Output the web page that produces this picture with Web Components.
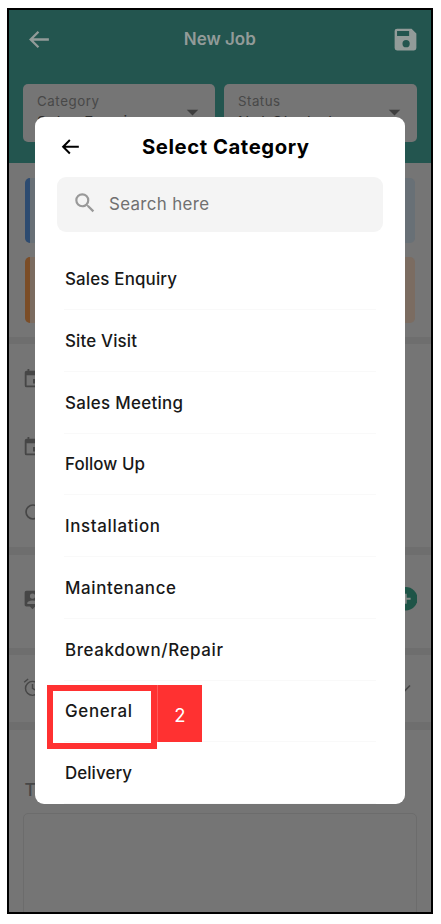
<!DOCTYPE html>
<html lang="en">
<head>
<meta charset="utf-8">
<title>New Job</title>
<style>
body{margin:0;background:#fff;font-family:Inter,"Open Sans",sans-serif;width:441px;height:924px;overflow:hidden}
</style>
</head>
<body>
<job-screen>
  <job-header slot="header"></job-header>
  <job-form></job-form>
  <category-dialog slot="dialog">
    <category-item w="112">Sales Enquiry</category-item>
    <category-item w="72">Site Visit</category-item>
    <category-item w="118">Sales Meeting</category-item>
    <category-item w="80">Follow Up</category-item>
    <category-item w="95">Installation</category-item>
    <category-item w="111">Maintenance</category-item>
    <category-item w="158">Breakdown/Repair</category-item>
    <category-item w="67">General</category-item>
    <category-item w="67">Delivery</category-item>
  </category-dialog>
  <step-marker slot="marker">2</step-marker>
</job-screen>
<script>
const define=(name,html,after)=>customElements.define(name,class extends HTMLElement{
  constructor(){super();this.attachShadow({mode:'open'}).innerHTML=html}
  connectedCallback(){if(after)after(this)}
});

/* One line of text tracked so that it spans w pixels. */
define('fit-text',`<style>:host{display:inline-block;white-space:nowrap}span{display:inline-block}</style><span><slot></slot></span>`,el=>{
  const s=el.shadowRoot.querySelector('span'),w=+el.getAttribute('w'),n=el.textContent.length;
  if(!w)return;
  const d=w-s.getBoundingClientRect().width;
  s.style.letterSpacing=(d/(n-1))+'px';
  s.style.marginRight=(-d/(n-1))+'px';
});

const paths={
  back:'<path d="M21 12H4M11 4.5 3.5 12l7.5 7.5" fill="none" stroke="currentColor" stroke-width="2.2"/>',
  save:'<path fill="currentColor" fill-rule="evenodd" d="M17 3H5a2 2 0 0 0-2 2v14a2 2 0 0 0 2 2h14a2 2 0 0 0 2-2V7zM12.5 18.5a3 3 0 1 1 0-6 3 3 0 0 1 0 6zM15 9H5V5h10z"/>',
  search:'<path fill="currentColor" d="M15.5 14h-.79l-.28-.27A6.47 6.47 0 0 0 16 9.5 6.5 6.5 0 1 0 9.5 16c1.61 0 3.09-.59 4.23-1.57l.27.28v.79l5 4.99L20.49 19zm-6 0a4.5 4.5 0 1 1 0-9 4.5 4.5 0 0 1 0 9z"/>',
  calendar:'<path fill="currentColor" fill-rule="evenodd" d="M19 3h-1V1h-2v2H8V1H6v2H5a2 2 0 0 0-2 2v14a2 2 0 0 0 2 2h14a2 2 0 0 0 2-2V5a2 2 0 0 0-2-2zm0 16H5V8h14zM12 12h5v5h-5z"/>',
  circle:'<circle cx="12" cy="12" r="7.6" fill="none" stroke="currentColor" stroke-width="1.8"/>',
  contact:'<path fill="currentColor" fill-rule="evenodd" d="M19 2H5a2 2 0 0 0-2 2v14c0 1.1.9 2 2 2h4l3 3 3-3h4a2 2 0 0 0 2-2V4a2 2 0 0 0-2-2zm-7 3a3 3 0 1 1 0 6 3 3 0 0 1 0-6zm6 12H6v-1c0-2 4-3 6-3s6 1 6 3z"/>',
  alarm:'<path d="M2.5 6 7 2.3M21.5 6 17 2.3M12 8v5l4 2.3" fill="none" stroke="currentColor" stroke-width="1.7"/><circle cx="12" cy="13" r="8" fill="none" stroke="currentColor" stroke-width="1.7"/>',
  chevron:'<path d="m6 9 6 6 6-6" fill="none" stroke="currentColor" stroke-width="2"/>',
  add:'<circle cx="12" cy="12" r="12" fill="#1e5447"/><path d="M7 12h10M12 7v10" stroke="#858a88" stroke-width="2"/>',
  caret:'<path d="M6 9h12l-6 6z" fill="currentColor"/>'
};
define('app-icon',`<style>:host{display:block;flex:none}svg{display:block}</style>`,el=>{
  const s=el.getAttribute('size');
  el.shadowRoot.innerHTML+=`<svg width="${s}" height="${s}" viewBox="0 0 24 24">${paths[el.getAttribute('name')]}</svg>`;
});

define('select-field',`<style>
:host{display:flex;box-sizing:border-box;height:58px;border-radius:5px;background:#757575;color:#484848;padding:7px 15px 0 14px;justify-content:space-between}
.text{display:flex;flex-direction:column;font-size:13.3px;line-height:20px}
.value{font-size:15px;line-height:20px;color:#2c2c2c;margin-top:1.5px}
app-icon{margin:10.5px -4px 0 0;color:#3e3e3e}
</style><div class="text"><slot name="label"></slot><div class="value"><slot></slot></div></div><app-icon name="caret" size="23"></app-icon>`);

define('job-header',`<style>
:host{display:flex;flex-direction:column;height:153px;background:#23554f;color:#929b99}
.bar{display:flex;align-items:center;justify-content:space-between;height:58px;padding:0 10.5px 0 18px}
.title{font-size:17px;font-weight:600;line-height:24px;margin-right:4px}
.fields{display:grid;grid-template-columns:192px 193px;gap:9px;padding:15.5px 0 0 14px}
</style>
<div class="bar"><app-icon name="back" size="25"></app-icon><fit-text class="title" w="72">New Job</fit-text><app-icon name="save" size="29"></app-icon></div>
<div class="fields">
<select-field><fit-text slot="label" w="62">Category</fit-text><fit-text w="106">Sales Enquiry</fit-text></select-field>
<select-field><fit-text slot="label" w="42">Status</fit-text><fit-text w="94">Not Started</fit-text></select-field>
</div>`);

define('job-form',`<style>
:host{display:flex;flex-direction:column;color:#464646}
.cards{display:flex;flex-direction:column;gap:14px;padding:14.5px 16.5px 14px 16px}
.card{height:65.5px;box-sizing:border-box;border-radius:5px;border-left:5px solid #2d4b70;background:#687076}
.card.o{border-color:#7b4d27;background:#7b6c61}
.band{height:7.5px;background:#6e6e6e}
.row{display:flex;align-items:center;justify-content:space-between;padding:0 14px 4px 13px}
.dates{height:203px;box-sizing:border-box;display:flex;flex-direction:column;padding:23.5px 13px 0;gap:46.5px}
.contact{height:93px;box-sizing:border-box}.remind{height:67px;box-sizing:border-box;padding-bottom:2px}
.chev{margin-right:2px}
.task{font-size:17.5px;font-weight:500;line-height:26px;padding:47.5px 0 0 15.5px;color:#474747}
.area{margin:10px 14.5px 0 14px;height:110px;border:1px solid #6c6c6c;border-radius:5px}
</style>
<div class="cards"><div class="card"></div><div class="card o"></div></div>
<div class="band"></div>
<div class="dates"><app-icon name="calendar" size="22"></app-icon><app-icon name="calendar" size="22"></app-icon><app-icon name="circle" size="22" style="margin-top:-3.5px"></app-icon></div>
<div class="band"></div>
<div class="row contact"><app-icon name="contact" size="21"></app-icon><app-icon name="add" size="23.5"></app-icon></div>
<div class="band"></div>
<div class="row remind"><app-icon name="alarm" size="21"></app-icon><app-icon class="chev" name="chevron" size="20"></app-icon></div>
<div class="band"></div>
<div class="task">Task</div>
<div class="area"></div>`);

define('category-item',`<style>
:host{display:flex;align-items:center;box-sizing:border-box;height:61.75px;margin:0 29px 0 29.5px;padding:1px 0 0 1px;border-bottom:1px solid #f9f9f9;color:#181818;font-size:16.9px;font-weight:500}
</style><div></div>`,el=>{
  const f=document.createElement('fit-text');
  f.setAttribute('w',el.getAttribute('w'));
  f.textContent=el.textContent;
  el.shadowRoot.querySelector('div').append(f);
});

define('category-dialog',`<style>
:host{display:flex;flex-direction:column;box-sizing:border-box;width:370.5px;height:687.5px;border-radius:9px;background:#fff;overflow:hidden;color:#000}
.head{display:flex;align-items:center;height:60.5px;padding-left:25px;gap:61px}
.head fit-text{font-size:20.3px;font-weight:700}
.search{display:flex;align-items:center;height:55px;flex:none;margin:0 22.5px;border-radius:9px;background:#f4f4f4;color:#707070;font-size:16.9px}
.search app-icon{margin:-2px 11.5px 0 14.5px;color:#999}
.list{padding-top:16.5px}
</style>
<div class="head"><app-icon name="back" size="21.5"></app-icon><fit-text w="167">Select Category</fit-text></div>
<div class="search"><app-icon name="search" size="26"></app-icon><fit-text w="100">Search here</fit-text></div>
<div class="list"><slot></slot></div>`);

define('step-marker',`<style>
:host{display:flex;align-items:flex-start}
.box{box-sizing:border-box;width:110px;height:64px;border:6px solid #ff3131}
.num{display:flex;align-items:center;justify-content:center;box-sizing:border-box;width:45px;height:57px;background:#ff3131;border-left:1px solid #ff5a5a;color:#fff;font-size:18.5px;line-height:1}
.num span{padding-top:3px}
</style><div class="box"></div><div class="num"><span><slot></slot></span></div>`);

define('job-screen',`<style>
:host{display:block;position:relative;height:924px}
.phone{box-sizing:border-box;width:426px;height:906px;border:2px solid #000;background:#757575;overflow:hidden;position:absolute;left:7px;top:8px}
.dialog{position:absolute;left:34.5px;top:116.5px}
.marker{position:absolute;left:47px;top:685px}
</style>
<div class="phone"><slot name="header"></slot><slot></slot></div>
<div class="dialog"><slot name="dialog"></slot></div>
<div class="marker"><slot name="marker"></slot></div>`);
</script>
</body>
</html>
